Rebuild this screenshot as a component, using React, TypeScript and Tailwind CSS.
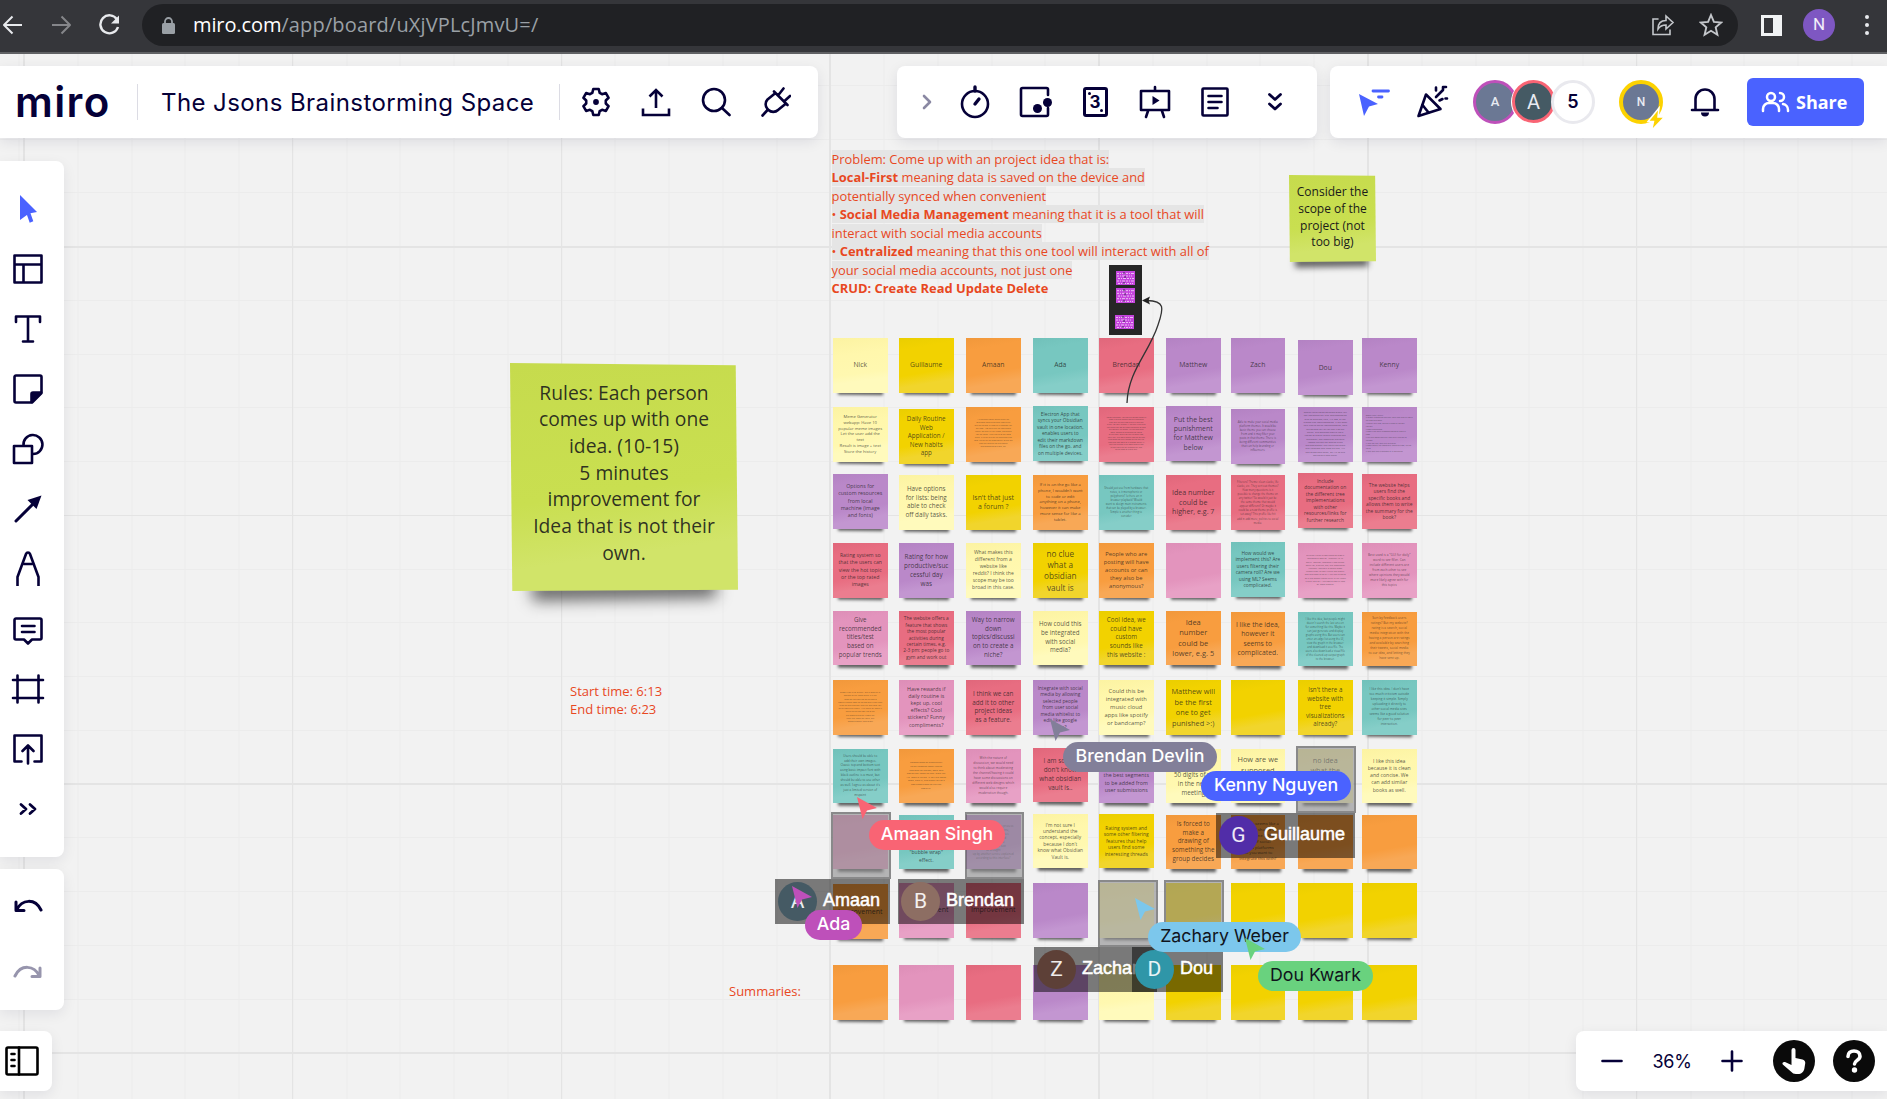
import type { ReactNode } from "react";

type Tone = "cream" | "yellow" | "orange" | "teal" | "red" | "purple" | "pink";

const TONES: Record<Tone, string> = {
  cream: "bg-[linear-gradient(172deg,#fcf3a2_0%,#fff7ac_30%,#fff8b0_62%,#fffabc_75%)]",
  yellow: "bg-[linear-gradient(170deg,#eace00_0%,#f2d200_20%,#f2d200_60%,#f1d52c_78%)]",
  orange: "bg-[linear-gradient(170deg,#f1983b_0%,#f89d3f_20%,#f89d3f_60%,#f8a856_78%)]",
  teal: "bg-[linear-gradient(170deg,#71c1ba_0%,#77c7c0_20%,#77c7c0_60%,#85cec8_78%)]",
  red: "bg-[linear-gradient(170deg,#e0677b_0%,#e86d81_20%,#e86d81_60%,#eb7d8f_78%)]",
  purple: "bg-[linear-gradient(170deg,#b382c3_0%,#ba88c9_20%,#ba88c9_60%,#c396d1_78%)]",
  pink: "bg-[linear-gradient(170deg,#dd8eb7_0%,#e394bd_20%,#e394bd_60%,#e8a1c6_78%)]",
};

type Note = { c: Tone; t?: string; s: number; p: number; dy?: number; left?: boolean };

const COLS = [833, 899, 966, 1033, 1099, 1166, 1230.5, 1298, 1362];
const ROWS = [338, 407, 475, 543, 611.5, 680, 748.5, 814.5, 883, 965];

const n = (c: Tone, t = "", s = 6.4, p = 8.7, dy = 0, left = false): Note => ({ c, t, s, p, dy, left });

const GRID: Note[][] = [
  [
    n("cream", "Nick", 6.8), n("yellow", "Guillaume", 6.8), n("orange", "Amaan", 6.8), n("teal", "Ada", 6.8),
    n("red", "Brendan", 6.8), n("purple", "Matthew", 6.8), n("purple", "Zach", 6.8), n("purple", "Dou", 6.8, 9, 2),
    n("purple", "Kenny", 6.8),
  ],
  [
    n("cream", "Meme Generator\nwebapp: Have 10\npopular meme images\nLet the user add the\ntext\nResult is image + text\nStore the history", 4.2, 5.8),
    n("yellow", "Daily Routine\nWeb\nApplication /\nNew habits\napp", 6.3, 8.5, 2),
    n("orange", "A discussion board where there are\ndedicated spaces and each note being\nable to indicate by posting a response. On\nany note. Also there are no instructions\nusually we sign in a full name, need send\nyou for home. Here's going to the most\nevent. If it's for this we like Reddit we tree\nhave like for for the most part all of the use\nhave as from the political topics\nand somewhat opinions, etc.", 2.1, 2.95),
    n("teal", "Electron App that\nsyncs your Obsidian\nvault in one location,\nenables users to\nedit their markdown\nfiles on the go, and\non multiple devices.", 4.8, 6.5, -1),
    n("red", "Meme generator: you can put memes made of\nfrom a list and images and the templates\nThen they get told how that is a long way\ngiven: you can't change it. The only thing that\ncan do we can ask the more members to post\nthe website is a meme. We can also have\nmany categories of memes for voting\nof the page, where we can list more now,\nevery day. The more people vote on the top\nthen when we put a meme on the last line\npage and add more to a random design. It\ncan't the system is the most favorite and\nto use there are any question or idea\nto the team or a new idea.", 2, 2.5),
    n("purple", "Put the best\npunishment\nfor Matthew\nbelow", 6.9, 9.3, -1),
    n("purple", "Able to make your social media\nplatform themes. It would be\nbasic theme you can choose\nfrom and it may filter your\nposts in that theme. There is\nbeing different communities\nthat can help branding or\ninfluencers.", 3, 4, 2),
    n("purple", "Search visualization webpage where you\ncan implement any tree implementation\nsuch as BinTrees, tree, AVL-RBT, or any\ncustom tree implementation. If you want\nyour tree to get an implementation, then\nthe website will let you see it on the\nserver. The webpage should use a\ntheme to display search functions and\nalternately, see images for previous\nimages include the specific given\nimplementation. The result can share\ntheir program and ideas on tree, AVL\nand follow each other, an AVL to give\ncan point a each other.", 2.5, 3.3),
    n("purple", "Books library helper:\nIt shows information that they have read and are doing\nthe book and more.\n* Stores your data, and get a place of yourself\nyourself\n* Book suggestions\n* Book view and a recommendation of users by\nbook\n* The site moves and they have their credited to\nreviews\n* User can edit, save text and finish\n* Book covers, the community based on book, review\nrating\n* User may add in message or in sentences", 2, 2.8, 0, true),
  ],
  [
    n("purple", "Options for\ncustom resources\nfrom local\nmachine (image\nand fonts)", 5.3, 7.2, -1),
    n("cream", "Have options\nfor lists: being\nable to check\noff daily tasks.", 6.3, 8.7),
    n("yellow", "Isn't that just\na forum ?", 6.9, 9),
    n("orange", "If it is on the go like a\nphone, I wouldn't want\nto code or edit\nanything on a phone,\nhowever it can make\nmore sense for like a\ntablet.", 4.2, 5.8),
    n("teal", "Should just use from hardware that\nnotes, is it monophonic or\npolyphonic? Is there an in\nbrowser playback? Would\nwant to design main instruments\nthat can be played by a browser.\nSimple is another thing to\nconsider", 2.9, 4),
    n("red", "Idea number\ncould be\nhigher, e.g. 7", 7.1, 9.5),
    n("red", "Filterers? Theme: clean slacks, life\nslacks, etc. They sort out themes?\nHow many questions is it\npossible to change the theme on\nany twitter? So would it just be\nthe same theme that would\nappear different? Or maybe it\ncould be a new theme profile is\nset away? This profile like hit\nadd in add more, politics to social\nmedia.", 2.9, 4.1),
    n("red", "Include\ndocumentation on\nthe different tree\nimplementations\nwith other\nresources/links for\nfurther research", 4.9, 6.5, -2),
    n("red", "The website helps\nusers find the\nspecific books and\nallows them to write\nthe summary for the\nbook?", 4.9, 6.4, -1),
  ],
  [
    n("red", "Rating system so\nthat the users can\nview the hot topic\nor the top rated\nimages", 5.2, 7.2),
    n("purple", "Rating for how\nproductive/suc\ncessful day\nwas", 6.4, 9),
    n("cream", "What makes this\ndifferent from a\nwebsite like\nreddit? I think the\nscope may be too\nbroad in this case.", 5, 7.1),
    n("yellow", "no clue\nwhat a\nobsidian\nvault is", 8.2, 11.3),
    n("orange", "People who are\nposting will have\naccounts or can\nthey also be\nanonymous?", 5.8, 8.1),
    n("pink"),
    n("teal", "How would we\nimplement this? Are\nusers filtering their\ncamera roll? Are we\nusing ML? Seems\ncomplicated.", 4.8, 6.4, -1),
    n("pink", "Different visualizations based on growth\nimplementations? Eg. Adjacency list vs.\nmatrix. BFS easy, community and highest\nwhich tag, Dijkstras, BFS, DFS. Embedding\nfunction? How hard to embed mode\ncleaner? Easy to easily create and display\nnew idea goals to call of it that can be noted\nfor a real model? Needs a nice to-the-theme\na great idea for it. This would have by now\nfor image growths.", 2.2, 3.2),
    n("pink", "Best used is a \"GUI for daily\"\nword to see filler. Can\ninclude different users are\nfrom each other to see\nwhere opinions they would\nmore likely agree with for\nthis topics", 3.5, 4.9),
  ],
  [
    n("pink", "Give\nrecommended\ntitles/test\nbased on\npopular trends", 6.2, 8.6, -1),
    n("red", "The website offers a\nfeature that shows\nthe most popular\nactivities during\ncertain times, e.g.\n2-3 pm: people go to\ngym and work out", 4.8, 6.4, -1),
    n("purple", "Way to narrow\ndown\ntopics/discussi\non to create a\nniche?", 6.3, 8.7, -1),
    n("cream", "How could this\nbe integrated\nwith social\nmedia?", 6.2, 8.7, -1),
    n("yellow", "Cool idea, we\ncould have\ncustom\nsounds like\nthis website :", 6.3, 8.7, -1),
    n("orange", "Idea\nnumber\ncould be\nlower, e.g. 5", 7.5, 10.6, -1),
    n("orange", "I like the idea,\nhowever it\nseems to\ncomplicated.", 6.8, 9.4),
    n("teal", "I like this idea, but people might\ndoesn't search the last one on\nfor something like this. Maybe it\ncan just generate and display\ngraphs using this. But users can\nenter an edge list using the UI,\nview the graph in the browser\nand download it as a file. The\nusers also download a visual file\nof the cleaned-up output graph\nto the browser.", 2.9, 4),
    n("orange", "Sort by feedback users\nratings? But my website?\nrating is a search, social\nmedia integration with the\nhaving a person are ratings\nand available by searching\ntheir tweets, social media\nto our idea, and letting they\nhave sent up.", 3.5, 5),
  ],
  [
    n("orange", "pDBs? What is the server? I love a tower of all\nmonster of the image where is in the\nimage we can take? So we see would\npossible moves come on so now there have been\nready to have that may have the low thank you\nwhich should be simple. A full group will move in\nto the series and note. Do to the\nthe different side of it move the\nyour? The image are users, and\ncommunication integration?", 2.1, 3.2),
    n("pink", "Have rewards if\ndaily routine is\nkept up, cool\neffects? Cool\nstickers? Funny\ncompliments?", 5.3, 7.2),
    n("red", "I think we can\nadd it to other\nproject ideas\nas a feature.", 6.3, 8.6),
    n("purple", "Integrate with social\nmedia by allowing\nselected people\nfrom user social\nmedia whitelist to\nedit like google\ndocs?", 4.8, 6.5),
    n("cream", "Could this be\nintegrated with\nmusic cloud\napps like spotify\nor bandcamp?", 5.8, 8),
    n("yellow", "Matthew will\nbe the first\none to get\npunished >:)", 7.4, 10.4),
    n("yellow"),
    n("yellow", "Isn't there a\nwebsite with\ntree\nvisualizations\nalready?", 6.2, 8.5),
    n("teal", "I like this idea. I don't have\ntoo much criticism outside\nkeeping it simple. Simply\nuploading it directly to\nother social media sites\nseems like a good solution\nfor peer to peer\ninteraction.", 3.5, 5),
  ],
  [
    n("teal", "Users should be able to\nadd their own images.\nClassic top and bottom text\nusing basic impact font with\nblack outline is a must, but\nshould be able to use other\nas well. I agree as about it's\njust a limited version of\nmspaint", 3.4, 4.9),
    n("orange", "Comparisons of productivity\nbeing between other users?\nSections for fitness, work and\nhabits they want as they learn-ish.\nAlg. should let the. If you are doing\ntasks, earn it, challenge you to a\nfast chess game of varying\ndifficulty.", 2.7, 3.6),
    n("pink", "With the nature of\ndiscussion, we would need\nto think about moderating\nthe channel/having it could\nhave some discussions on\ndifferent web designs which\nwould also require\nmoderation though.", 3.5, 5),
    n("red", "I am sorry I\ndon't know\nwhat obsidian\nvault is..", 6.4, 8.8, -1),
    n("purple", "Allow people to\nvote on songs, with\nthe best segments\nto be added from\nuser submissions", 5.3, 7.5),
    n("cream", "Memorize the\nfirst\n50 digits of pi\nin the next\nmeeting", 6.2, 8.8),
    n("cream", "How are we\nsupposed\nto keep\nthese notes", 7.4, 11),
    n("cream", "no idea\nwhat the\nidea is\nabout", 7.2, 10.4),
    n("cream", "I like this idea\nbecause it is clean\nand concise. We\ncan add similar\nbooks as well.", 5.1, 7.2),
  ],
  [
    n("pink"),
    n("teal", "Should have\na sound and\nmotion like\na popping\n\"bubble wrap\"\neffect.", 5, 7.4),
    n("purple", "Possibly there can be a process\nto keep the daily routine,\nusing sounds and notes\nso they can also find\nnotes. Would it be\nhelpful to have text\nbe brought\nup by another service explained\naccording to this interface?", 3, 4),
    n("cream", "I'm not sure I\nunderstand the\nconcept, especially\nbecause I don't\nknow what Obsidian\nVault is.", 4.8, 6.4, -1),
    n("yellow", "Rating system and\nsome other filtering\nfeatures that help\nusers find some\ninteresting threads", 4.9, 6.5, -1),
    n("orange", "Is forced to\nmake a\ndrawing of\nsomething the\ngroup decides", 6.3, 8.7),
    n("orange", "This idea seems like a\ngood and should be\neasily done. What\nkind of social\nmedia platforms\ndo you want to\nintegrate this with?", 4.2, 5.8),
    n("orange"),
    n("orange"),
  ],
  [
    n("orange", "Improvement", 7, 9, 1), n("pink", "Improvement", 7), n("red", "Improvement", 7), n("purple"),
    n("cream"), n("yellow"), n("yellow"), n("yellow"), n("yellow"),
  ],
  [
    n("orange"), n("pink"), n("red"), n("purple"), n("cream"), n("yellow"), n("yellow"), n("yellow"), n("yellow"),
  ],
];

function Sticky({ note, x, y }: { note: Note; x: number; y: number }) {
  const small = note.s < 3.6;
  return (
    <div className="absolute size-[54.5px]" style={{ left: x, top: y + (note.dy ?? 0) }}>
      <div className="absolute -bottom-[2.5px] left-[5px] right-[5px] h-[6px] rotate-[0.6deg] bg-black/60 blur-[1.7px]" />
      <div className={`relative flex size-full items-center justify-center ${TONES[note.c]}`}>
        <p
          className={`whitespace-pre font-['Open_Sans',sans-serif] ${small ? "text-[#1a1a1a]/65" : "text-[#1a1a1a]/75"} ${note.left ? "text-left" : "text-center"}`}
          style={{ fontSize: small ? note.s * 0.92 : note.s, lineHeight: `${note.p}px` }}
        >
          {note.t}
        </p>
      </div>
    </div>
  );
}

function Mark({ children }: { children: ReactNode }) {
  return <span className="bg-[#e5e5e5]">{children}</span>;
}

function Selected({ x, y }: { x: number; y: number }) {
  return (
    <div
      className="absolute h-[67px] w-[59.5px] border-2 border-[#5c5c5e]/70 bg-[#8a8a8c]/60 bg-clip-padding"
      style={{ left: x, top: y }}
    />
  );
}

function Editor({ x, y, w, color, name }: { x: number; y: number; w: number; color: string; name: string }) {
  return (
    <div className="absolute flex h-[45px] items-center overflow-hidden bg-black/50 pl-[3px]" style={{ left: x, top: y, width: w }}>
      <div className={`flex size-[39px] shrink-0 items-center justify-center rounded-full font-['Roboto',sans-serif] text-[21px] text-white/90 ${color}`}>
        {name[0]}
      </div>
      <span className="-mt-[3px] ml-[6px] whitespace-nowrap font-['Liberation_Sans',sans-serif] text-[18px] text-white [-webkit-text-stroke:0.5px_white]">
        {name}
      </span>
    </div>
  );
}

function Pointer({ x, y, fill }: { x: number; y: number; fill: string }) {
  return (
    <svg className="absolute h-[22px] w-5" style={{ left: x, top: y }} viewBox="0 0 20 22">
      <path d="M0 0 20 11 10 13.500 5.500 22Z" fill={fill} />
    </svg>
  );
}

function Pill({ x, y, w, tone, children }: { x: number; y: number; w: number; tone: string; children: ReactNode }) {
  return (
    <div
      className={`absolute flex h-[30px] items-center justify-center whitespace-nowrap rounded-full pb-px font-['Inter',sans-serif] text-[17.8px] ${tone}`}
      style={{ left: x, top: y, width: w }}
    >
      {children}
    </div>
  );
}

function Thumb({ className }: { className: string }) {
  return (
    <svg className={`w-[19px] shrink-0 ${className}`} viewBox="0 0 19 14" preserveAspectRatio="none">
      <rect width="19" height="14" fill="#c545dd" />
      <path d="M1 2.500h17M1 5h15M2 7.500h16M1 10h17M2 12.500h15" stroke="#f6dcfb" strokeWidth="0.8" strokeDasharray="2 1 1 1 3 1" />
      <path d="M8 1v2M9 5v2M8 11v2" stroke="#41205c" />
    </svg>
  );
}

function Board() {
  return (
    <div className="absolute inset-0 overflow-hidden bg-[#f2f2f2]">
      <div className="absolute inset-0 bg-[repeating-linear-gradient(90deg,#ececec_0_1px,transparent_1px_53.76px)] [background-position-x:23.5px]" />
      <div className="absolute inset-0 bg-[repeating-linear-gradient(180deg,#ececec_0_1px,transparent_1px_53.76px)] [background-position-y:31px]" />
      <div className="absolute inset-y-0 left-[23px] right-0 bg-[repeating-linear-gradient(90deg,#e4e4e4_0_1.6px,transparent_1.6px_268.8px)]" />
      <div className="absolute inset-x-0 bottom-0 top-[245.5px] bg-[repeating-linear-gradient(180deg,#e4e4e4_0_1.6px,transparent_1.6px_268.7px)]" />

      <div className="absolute left-[831.5px] top-[150px] whitespace-nowrap font-['Open_Sans',sans-serif] text-[12.9px] leading-[18.45px] text-[#e8481f]">
        <p><Mark>Problem: Come up with an project idea that is:</Mark></p>
        <p><Mark><b>Local-First</b> meaning data is saved on the device and</Mark></p>
        <p><Mark>potentially synced when convenient</Mark></p>
        <p><Mark>• <b>Social Media Management</b> meaning that it is a tool that will</Mark></p>
        <p><Mark>interact with social media accounts</Mark></p>
        <p><Mark>• <b>Centralized</b> meaning that this one tool will interact with all of</Mark></p>
        <p><Mark>your social media accounts, not just one</Mark></p>
        <p><b>CRUD: Create Read Update Delete</b></p>
      </div>

      <div className="absolute left-[570px] top-[682px] whitespace-pre font-['Open_Sans',sans-serif] text-[13px] leading-[18.2px] text-[#e8481f]">
        {"Start time: 6:13\nEnd time: 6:23"}
      </div>
      <div className="absolute left-[729px] top-[982px] font-['Open_Sans',sans-serif] text-[13px] leading-[18.2px] text-[#e8481f]">
        Summaries:
      </div>

      <div className="absolute left-[510px] top-[363px] h-[228px] w-[228px]">
        <div className="absolute -bottom-[8px] left-[22px] right-[22px] h-[20px] rotate-[-1deg] bg-black/60 blur-[8px]" />
        <div className="relative flex size-full items-center justify-center bg-[linear-gradient(172deg,#c6db4d_0%,#c9df50_55%,#cbe057_62%,#d1e469_80%)] [clip-path:polygon(0_0,99%_1%,100%_99.5%,1%_100%)]">
          <p className="whitespace-pre pb-[8px] text-center font-['Open_Sans',sans-serif] text-[19.3px] leading-[26.7px] text-[#1a1a1a]/90">
            {"Rules: Each person\ncomes up with one\nidea. (10-15)\n5 minutes\nimprovement for\nIdea that is not their\nown."}
          </p>
        </div>
      </div>

      <div className="absolute left-[1289px] top-[175px] size-[87px]">
        <div className="absolute -bottom-[5px] left-[6px] right-[8px] h-[10px] rotate-[-1deg] bg-black/60 blur-[3px]" />
        <div className="relative flex size-full items-center justify-center bg-[linear-gradient(172deg,#c6db4d_0%,#c9df50_55%,#cbe057_62%,#d1e469_80%)] [clip-path:polygon(0_0,99%_1%,100%_99%,1%_100%)]">
          <p className="whitespace-pre pb-[2px] text-center font-['Open_Sans',sans-serif] text-[12px] leading-[16.7px] text-[#1a1a1a]">
            {"Consider the\nscope of the\nproject (not\ntoo big)"}
          </p>
        </div>
      </div>

      {GRID.map((row, r) =>
        row.map((note, c) => <Sticky key={`${r}-${c}`} note={note} x={COLS[c]} y={ROWS[r]} />),
      )}

      <div className="absolute left-[1109px] top-[265px] flex h-[70px] w-[33px] flex-col items-center bg-[#262626] pt-[6px]">
        <Thumb className="h-[14px]" />
        <Thumb className="mt-[3px] h-[15px]" />
        <Thumb className="mr-[2px] mt-[12px] h-[14px]" />
      </div>
      <svg className="absolute left-[1120px] top-[290px] h-[116px] w-[50px]" viewBox="1120 290 50 116" fill="none">
        <path d="M1127 403c1-32 22-50 31-78 6-17 7-24-11-24.500" stroke="#333" strokeWidth="1.3" />
        <path d="m1142 300.500 8-4-1.500 4 1.500 4Z" fill="#222" />
      </svg>

      <Selected x={831} y={811.5} />
      <Selected x={964.5} y={811.5} />
      <Selected x={1296} y={745.5} />
      <Selected x={1098} y={880} />
      <Selected x={1164} y={880} />

      <Editor x={775} y={879} w={115} color="bg-[#455a64]" name="Amaan" />
      <Editor x={898} y={879} w={126} color="bg-[#8d6e63]" name="Brendan" />
      <Editor x={1216} y={813} w={139} color="bg-[#512da8]" name="Guillaume" />
      <Editor x={1034} y={947} w={123} color="bg-[#5d4037]" name="Zachary" />
      <Editor x={1132} y={947} w={91} color="bg-[#2f96a8]" name="Dou" />

      <Pointer x={1050} y={719} fill="#827f99" />
      <Pill x={1063} y={742} w={154} tone="bg-[#827f99] text-white font-medium">Brendan Devlin</Pill>
      <Pill x={1201} y={771} w={150} tone="bg-[#4a62ff] text-white font-medium">Kenny Nguyen</Pill>
      <Pointer x={857} y={797} fill="#f96474" />
      <Pill x={869} y={820} w={136} tone="bg-[#f96474] text-white font-medium">Amaan Singh</Pill>
      <Pointer x={792} y={886} fill="#be50ba" />
      <Pill x={805} y={910} w={57} tone="bg-[#be50ba] text-white font-medium">Ada</Pill>
      <Pointer x={1135} y={898} fill="#7cc7ec" />
      <Pill x={1148} y={922} w={153} tone="bg-[#7cc7ec] text-[#10141c]">Zachary Weber</Pill>
      <Pointer x={1245} y={938} fill="#69d27e" />
      <Pill x={1258} y={961} w={115} tone="bg-[#69d27e] text-[#10141c]">Dou Kwark</Pill>
    </div>
  );
}

function Icon({ children, w = 30, h = 30, sw = 2.6 }: { children: ReactNode; w?: number; h?: number; sw?: number }) {
  return (
    <svg width={w} height={h} viewBox={`0 0 ${w} ${h}`} fill="none" stroke="currentColor" strokeWidth={sw} strokeLinecap="round" strokeLinejoin="round" className="shrink-0">
      {children}
    </svg>
  );
}

function Slot({ children }: { children: ReactNode }) {
  return <button className="flex size-[60px] shrink-0 items-center justify-center">{children}</button>;
}

function BrowserBar() {
  return (
    <div className="relative flex h-[54px] shrink-0 items-start border-b-2 border-[#606164] bg-[#35363a]">
      <div className="flex h-[50px] w-[142px] shrink-0 items-center text-[#e8eaed]">
        <span className="ml-[2px]"><Icon w={22} h={22} sw={2}><path d="M20 11H2M10.500 2.500 2 11l8.500 8.500" strokeLinecap="butt" /></Icon></span>
        <span className="ml-[26px] text-[#85868a]"><Icon w={22} h={22} sw={2}><path d="M2 11h18M11.500 2.500 20 11l-8.500 8.500" strokeLinecap="butt" /></Icon></span>
        <span className="ml-[26px]"><Icon w={22} h={22} sw={2.4}><path d="M19 5.500A9 9 0 1 0 20 13" strokeLinecap="butt" /><path d="M21 1.500v8h-8z" fill="currentColor" stroke="none" /></Icon></span>
      </div>
      <div className="mt-1 flex h-[42px] w-[1596px] shrink-0 items-center rounded-full bg-[#202124] pl-[20px] pr-[15px]">
        <svg className="h-[17px] w-[13px] shrink-0" viewBox="0 0 13 17"><rect y="6" width="13" height="11" rx="1.500" fill="#9aa0a6" /><path d="M3 7V4.500a3.500 3.500 0 0 1 7 0V7" fill="none" stroke="#9aa0a6" strokeWidth="1.8" /></svg>
        <span className="ml-[18px] font-['Open_Sans',sans-serif] text-[20px] leading-none tracking-[0.15px] text-[#9aa0a6]">
          <span className="tracking-[-0.1px] text-white">miro.com</span>/app/board/uXjVPLcJmvU=/
        </span>
        <span className="ml-auto flex gap-[24px] text-[#c4c7cb]">
          <Icon w={24} h={24} sw={1.6}><path d="M7 6H2v15.500h17V17M7 16c0-6 3-8.500 8-8.500V3l7 6.500-7 6.500v-4c-4 0-6 1-8 4Z" strokeLinejoin="miter" /></Icon>
          <Icon w={24} h={24} sw={1.9}><path d="m12 2 2.900 6.900 7.400.6-5.600 4.900 1.700 7.300L12 17.800l-6.400 3.900 1.700-7.300-5.600-4.900 7.400-.6Z" strokeLinejoin="miter" /></Icon>
        </span>
      </div>
      <div className="flex h-[50px] flex-1 items-center">
        <div className="ml-[23px] h-[21px] w-[21px] border-[3px] border-r-[9px] border-[#f1f3f4]" />
        <div className="ml-[21px] flex size-8 items-center justify-center rounded-full bg-[#7e57c2] font-['Roboto',sans-serif] text-[17px] text-white/90">N</div>
        <div className="ml-[29.500px] flex flex-col gap-[4px]">
          <i className="size-1 rounded-full bg-[#e8eaed]" /><i className="size-1 rounded-full bg-[#e8eaed]" /><i className="size-1 rounded-full bg-[#e8eaed]" />
        </div>
      </div>
    </div>
  );
}

function TopBars() {
  return (
    <div className="mt-3 flex h-[72px] shrink-0 text-[#050038]">
      <div className="flex w-[818px] shrink-0 items-center rounded-r-lg bg-white shadow-[0_4px_14px_rgba(5,0,56,0.09)]">
        <span className="-mt-px ml-[15px] w-[122px] font-['Inter',sans-serif] text-[42px] font-semibold leading-none tracking-[1.4px]">miro</span>
        <div className="h-9 w-px shrink-0 bg-[#dcdce4]" />
        <span className="ml-[23px] mt-[2px] w-[398px] whitespace-nowrap font-['Inter',sans-serif] text-[24px] tracking-[0.42px]">The Jsons Brainstorming Space</span>
        <div className="mr-[6px] h-9 w-px shrink-0 bg-[#dcdce4]" />
        <Slot>
          <Icon>
            <path d="M12.300 2h5.400l1 3.800 2.400 1.400 3.800-1.100 2.700 4.700-2.800 2.700v3l2.800 2.700-2.700 4.700-3.800-1.100-2.400 1.400-1 3.800h-5.400l-1-3.800-2.400-1.400-3.800 1.100-2.700-4.700 2.800-2.700v-3L2.400 10.800l2.700-4.700 3.800 1.100 2.400-1.400Z" />
            <circle cx="15" cy="15" r="1.600" fill="currentColor" />
          </Icon>
        </Slot>
        <Slot><Icon><path d="M2 21.500V28h26v-6.500M15 21V3M8.500 9.500 15 3l6.500 6.500" strokeLinecap="butt" strokeLinejoin="miter" /></Icon></Slot>
        <Slot><Icon><circle cx="13" cy="13" r="11" /><path d="m21 21 7.500 7" /></Icon></Slot>
        <Slot>
          <Icon>
            <path d="M13 4.500 26.500 18M14.500 6 6.500 12.500c-2.500 2.500-2.500 7 0 9.500l1 1c2.500 2.500 7 2.500 9.500 0l8-6.500M7 22.500 1.500 28.500M17 8.500 22.500 1.500M23 14.500l6-5.500" />
          </Icon>
        </Slot>
      </div>

      <div className="ml-[79px] flex w-[420px] shrink-0 items-center rounded-lg bg-white shadow-[0_4px_14px_rgba(5,0,56,0.09)]">
        <div className="flex w-12 justify-center pl-[11px] text-[#8a88a3]"><Icon w={10} h={16}><path d="m2 2 6 6-6 6" /></Icon></div>
        <Slot><Icon w={30} h={34}><circle cx="15" cy="19" r="13" /><path d="M15 6V2M15 19l4-5" strokeWidth="3.4" /></Icon></Slot>
        <Slot>
          <Icon w={34} h={32}>
            <path d="M30 9V3.500a1.500 1.500 0 0 0-1.500-1.500h-24A1.500 1.500 0 0 0 3 3.500v25A1.500 1.500 0 0 0 4.500 30H28.500a1.500 1.500 0 0 0 1.500-1.500V22" />
            <circle cx="29.500" cy="16.500" r="4.500" fill="currentColor" stroke="none" /><circle cx="19.500" cy="22.500" r="4.500" fill="currentColor" stroke="none" />
          </Icon>
        </Slot>
        <Slot>
          <span className="relative flex h-[30px] w-[25px] items-center justify-center rounded-[3px] border-[3px] border-current font-['Inter',sans-serif] text-[17px] font-bold leading-none">
            3
            <i className="absolute left-[2px] top-[2px] size-[3px] rounded-full bg-current" /><i className="absolute bottom-[2px] right-[2px] size-[3px] rounded-full bg-current" />
          </span>
        </Slot>
        <Slot>
          <Icon w={32} h={34}>
            <path d="M2 6h28v19H2ZM16 5V2M9 26l-2 6M23 26l2 6" /><path d="m13.500 11 7 4.500-7 4.500Z" fill="currentColor" stroke="none" />
          </Icon>
        </Slot>
        <Slot><Icon w={30}><rect x="2.500" y="1.500" width="25" height="27" rx="1" /><path d="M8.500 9h13M8.500 15h13M8.500 21h9" /></Icon></Slot>
        <Slot><Icon w={16} h={20} sw={2.8}><path d="m2.500 2.500 5.500 5 5.500-5M2.500 12l5.500 5 5.500-5" /></Icon></Slot>
      </div>

      <div className="ml-[13px] flex flex-1 items-center rounded-l-lg bg-white pl-[14px] shadow-[0_4px_14px_rgba(5,0,56,0.09)]">
        <button className="flex h-[60px] w-[59px] shrink-0 items-center justify-center text-[#4a62ff]">
          <Icon w={32} h={28}>
            <path d="M1 6 20 16l-9 2.500-5 9.500Z" fill="currentColor" stroke="none" /><path d="M15 3h15.500M20.500 9H24" strokeWidth="2.8" />
          </Icon>
        </button>
        <Slot>
          <Icon w={34} h={34}>
            <path d="M10 9.500 24.500 24 2.500 31Z" /><path d="m6.500 20 6 7.500" />
            <path d="M20 2.500v3M20 12l7-7v-3M27 2h3M29.500 13.500h1.500M23.500 15.500l3-1.500" />
          </Icon>
        </Slot>
        <div className="ml-[10px] flex w-[152px] shrink-0 font-['Roboto',sans-serif] text-[#e8ebf2]">
          <div className="flex size-11 shrink-0 items-center justify-center rounded-full border-[3px] border-[#be50ba] bg-[#6b7894] text-[13px] font-medium">A</div>
          <div className="-my-px -ml-[6px] size-[46px] shrink-0 rounded-full border-[1.5px] border-white bg-white">
            <div className="flex size-[43px] items-center justify-center rounded-full border-[3px] border-[#f96474] bg-[#455a64] text-[20px]">A</div>
          </div>
          <div className="-ml-[6px] flex size-11 shrink-0 items-center justify-center rounded-full border-[3px] border-[#e9e9ee] bg-white pb-[2px] font-['Inter',sans-serif] text-[18px] font-semibold text-[#050038]">5</div>
        </div>
        <div className="relative -ml-[6px] flex size-11 shrink-0 items-center justify-center rounded-full border-4 border-[#fcd200] bg-[#6b7894] font-['Roboto',sans-serif] text-[12px] font-medium text-[#e8ebf2]">
          N
          <svg className="absolute -bottom-[12px] -right-[7px] h-[26px] w-[20px]" viewBox="0 0 20 26"><path d="M13 2 2 15.500h5.500L5.500 24.500 18.500 11h-6.500Z" fill="#fcd200" stroke="#fff" strokeWidth="1.5" /></svg>
        </div>
        <div className="flex w-[84px] shrink-0 items-center justify-center">
          <Icon w={30} h={30}><path d="M5.500 22.500V12a9.500 9.500 0 0 1 19 0v10.500M2 23h26" /><path d="M11 25.500h8a4 4 0 0 1-8 0Z" fill="currentColor" stroke="none" /></Icon>
        </div>
        <button className="flex h-12 w-[117px] shrink-0 items-center rounded-md bg-[#4a62ff] pl-[14px] font-['Open_Sans',sans-serif] text-[18px] font-bold text-white">
          <Icon w={29} h={24} sw={2.5}>
            <circle cx="10" cy="7" r="4" /><path d="M2 21v-2a6 6 0 0 1 6-6h4a6 6 0 0 1 6 6v2M19 3a4 4 0 0 1 0 8M22 14a6 6 0 0 1 5 6v1" />
          </Icon>
          <span className="ml-[6px]">Share</span>
        </button>
      </div>
    </div>
  );
}

function SideBars() {
  return (
    <div className="mt-[23px] flex w-16 flex-1 flex-col text-[#050038]">
      <div className="flex h-[696px] w-16 shrink-0 flex-col items-center rounded-r-lg bg-white py-[18px] pr-2 shadow-[0_4px_14px_rgba(5,0,56,0.08)]">
        <div className="flex flex-col">
          <Slot><span className="mt-px text-[#4a62ff]"><Icon w={18} h={30} sw={3.8}><path d="M1 0 18 17l-8 1.500L1 25Z" fill="currentColor" stroke="none" /><path d="m9 17 3.500 10" strokeLinecap="butt" /></Icon></span></Slot>
          <Slot><Icon><path d="M1.500 1.500h27v27h-27ZM1.500 10.500h27M10.500 10.500v18" /></Icon></Slot>
          <Slot><Icon w={28}><path d="M2 8V2.500h24V8M14 2.500v25M9 27.500h10" /></Icon></Slot>
          <Slot><Icon><path d="M1.500 3A1.500 1.500 0 0 1 3 1.500h24A1.500 1.500 0 0 1 28.500 3v16l-9.500 9.500H3A1.500 1.500 0 0 1 1.500 27Z" /><path d="M28 18.500h-8a1.500 1.500 0 0 0-1.500 1.500v8Z" fill="currentColor" /></Icon></Slot>
          <Slot><Icon w={32} h={34}><path d="M2 14h18v17H2ZM11.500 13.500a9.500 9.500 0 1 1 9.500 8.500" /></Icon></Slot>
          <Slot><Icon w={28} h={28}><path d="M2 26 22 6" strokeWidth="3" /><path d="M27.500.5 13.500 5l9 9Z" fill="currentColor" stroke="none" /></Icon></Slot>
          <Slot><Icon w={26} h={36}><path d="M2.500 35V26L11 3c.8-2 3.200-2 4 0l8.500 23v9M8.500 13h9" strokeLinecap="butt" /></Icon></Slot>
          <Slot><span className="mt-[3px]"><Icon><path d="M3 2.500h24A1.500 1.500 0 0 1 28.500 4v18a1.500 1.500 0 0 1-1.500 1.500h-8L15 27.500l-4-4H3A1.500 1.500 0 0 1 1.500 22V4A1.500 1.500 0 0 1 3 2.500ZM9 10h12.500M9 16h12.500" /></Icon></span></Slot>
          <Slot><Icon w={34} h={30}><path d="M2 6h30M2 24h30M6.500 1.500v27M27.500 1.500v27" /></Icon></Slot>
          <Slot><Icon w={30} h={32}><path d="M8.500 28.500h-7v-26h27v26h-7M15 30.500V13M9.500 18l5.500-5.500 5.500 5.500" /></Icon></Slot>
          <Slot><Icon w={18} h={14} sw={2.8}><path d="m2 2.500 5 4.500-5 4.500M11 2.500l5 4.500-5 4.500" /></Icon></Slot>
        </div>
      </div>
      <div className="mt-3 flex h-[141px] w-16 shrink-0 flex-col items-center rounded-r-lg bg-white pr-2 pt-[7px] shadow-[0_4px_14px_rgba(5,0,56,0.08)]">
        <Slot><Icon w={30} h={14} sw={3}><path d="M3 3v8.500h8M3.500 11C9 0 22-1 28 11" /></Icon></Slot>
        <div className="mt-[6px] text-[#9795ad]"><Slot><Icon w={30} h={14} sw={3}><path d="M27 3v8.500h-8M26.500 11C21 0 8-1 2 11" /></Icon></Slot></div>
      </div>
      <div className="mt-[21px] flex h-[60px] w-[52px] shrink-0 items-center rounded-r-lg bg-white pl-[5px] text-black shadow-[0_4px_14px_rgba(5,0,56,0.08)]">
        <Icon w={34} h={30}><rect x="1.500" y="1.500" width="31" height="27" rx="1.500" /><path d="M14 1.500v27M6.500 8h3M6.500 14h3M6.500 20h3" /></Icon>
      </div>
    </div>
  );
}

function ZoomBar() {
  return (
    <div className="mb-2 flex h-[60px] w-[311px] items-center self-end rounded-l-lg bg-white text-[#050038] shadow-[0_4px_14px_rgba(5,0,56,0.08)]">
      <div className="ml-[25px]"><Icon w={22} h={22}><path d="M1.500 11h19" /></Icon></div>
      <span className="ml-[20px] mt-px w-[58px] text-center font-['Inter',sans-serif] text-[18px] tracking-[-0.3px]">36%</span>
      <div className="ml-[20px]"><Icon w={22} h={22}><path d="M1.500 11h19M11 1.500v19" /></Icon></div>
      <div className="ml-[30px] flex size-[42px] shrink-0 items-center justify-center rounded-full bg-[#0a0a0a]">
        <svg width="24" height="27" viewBox="0 0 24 27"><path d="M9.500 2a2 2 0 0 1 4 0v8l7 1.500c2 .5 3 2 2.700 4l-.8 5c-.6 3.500-3 5.500-6.500 5.500h-2c-2 0-3.500-.8-5-2.500L.8 16.500c-1-1.300.3-3.200 2.200-2.400l6.500 2.900Z" fill="#fff" /></svg>
      </div>
      <div className="ml-[18px] flex size-[42px] shrink-0 items-center justify-center rounded-full bg-[#0a0a0a]">
        <svg width="18" height="24" viewBox="0 0 18 24" fill="none"><path d="M3 7.500C3 4 5.500 2 9 2s6 2 6 5.200c0 4-5.500 4.300-5.500 7.800" stroke="#fff" strokeWidth="3.6" strokeLinecap="round" /><circle cx="9.500" cy="21" r="2.700" fill="#fff" /></svg>
      </div>
    </div>
  );
}

export default function App() {
  return (
    <div className="relative flex h-[1099px] w-[1887px] flex-col overflow-hidden">
      <Board />
      <BrowserBar />
      <div className="relative flex flex-1 flex-col">
        <TopBars />
        <div className="flex flex-1 justify-between">
          <SideBars />
          <ZoomBar />
        </div>
      </div>
    </div>
  );
}
